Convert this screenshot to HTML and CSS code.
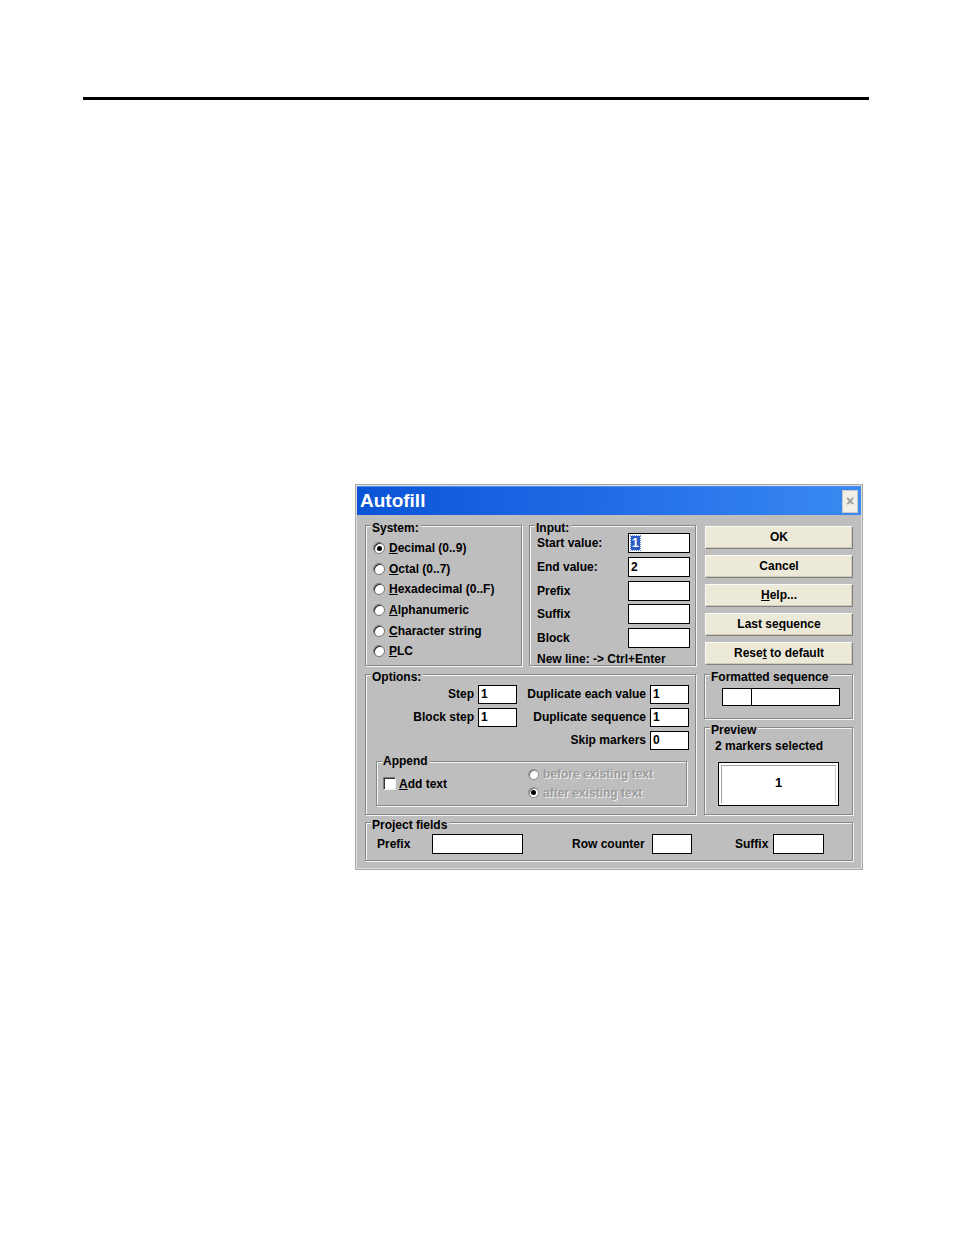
FILE: index.html
```html
<!DOCTYPE html>
<html>
<head>
<meta charset="utf-8">
<title>Autofill</title>
<link rel="stylesheet" href="styles.css">
</head>
<body>
<div class="rule"></div>

<div class="dialog">
  <div class="titlebar">
    <span class="title">Autofill</span>
    <span class="close">&#215;</span>
  </div>
  <div class="body">
    <div class="row1">
      <div class="group system">
        <span class="legend">System:</span>
        <div class="radio-row"><span class="radio checked"></span><span><u>D</u>ecimal (0..9)</span></div>
        <div class="radio-row"><span class="radio"></span><span><u>O</u>ctal (0..7)</span></div>
        <div class="radio-row"><span class="radio"></span><span><u>H</u>exadecimal (0..F)</span></div>
        <div class="radio-row"><span class="radio"></span><span><u>A</u>lphanumeric</span></div>
        <div class="radio-row"><span class="radio"></span><span><u>C</u>haracter string</span></div>
        <div class="radio-row"><span class="radio"></span><span><u>P</u>LC</span></div>
      </div>

      <div class="group input">
        <span class="legend">Input:</span>
        <div class="input-rows">
          <div class="input-row"><span>Start value:</span><span class="field wide"><span class="sel">1</span></span></div>
          <div class="input-row"><span>End value:</span><span class="field wide">2</span></div>
          <div class="input-row"><span>Prefix</span><span class="field wide"></span></div>
          <div class="input-row"><span>Suffix</span><span class="field wide"></span></div>
          <div class="input-row"><span>Block</span><span class="field wide"></span></div>
        </div>
        <div class="newline">New line: -&gt; Ctrl+Enter</div>
      </div>

      <div class="buttons">
        <div class="btn">OK</div>
        <div class="btn">Cancel</div>
        <div class="btn"><u>H</u>elp...</div>
        <div class="btn">Last se<u>q</u>uence</div>
        <div class="btn">Rese<u>t</u> to default</div>
      </div>
    </div>

    <div class="row2">
      <div class="group options">
        <span class="legend">Options:</span>
        <div class="opt-grid">
          <span class="lbl">Step</span><span class="field">1</span>
          <span class="lbl">Duplicate each value</span><span class="field">1</span>
          <span class="lbl">Block step</span><span class="field">1</span>
          <span class="lbl">Duplicate sequence</span><span class="field">1</span>
          <span></span><span></span>
          <span class="lbl">Skip markers</span><span class="field">0</span>
        </div>
        <div class="group append">
          <span class="legend legend-low">Append</span>
          <div class="append-left">
            <span class="check"></span><span><u>A</u>dd text</span>
          </div>
          <div class="append-right">
            <div class="dis-row"><span class="radio dim"></span><span class="disabled">before existing text</span></div>
            <div class="dis-row"><span class="radio dim checked"></span><span class="disabled">after existing text</span></div>
          </div>
        </div>
      </div>

      <div class="right-col">
        <div class="group formatted">
          <span class="legend">Formatted sequence</span>
          <div class="seq-box"><span class="seq-a"></span><span class="seq-b"></span></div>
        </div>
        <div class="group preview">
          <span class="legend">Preview</span>
          <div class="preview-text">2 markers selected</div>
          <div class="preview-box">1</div>
        </div>
      </div>
    </div>

    <div class="group project">
      <span class="legend">Project fields</span>
      <div class="proj-grid">
        <span>Prefix</span><span class="field"></span><span></span>
        <span>Row counter</span><span class="field"></span><span></span>
        <span>Suffix</span><span class="field"></span>
      </div>
    </div>
  </div>
</div>
</body>
</html>
```

FILE: styles.css
```css
* { box-sizing: border-box; }

body {
  margin: 0;
  background: #fff;
  font-family: "Liberation Sans", Arial, sans-serif;
  font-size: 12px;
  font-weight: bold;
  color: #000;
}

.rule {
  height: 3px;
  background: #000;
  margin: 97px 85px 0 83px;
}

.dialog {
  width: 508px;
  margin: 384px 0 0 355px;
  border: 1px solid #a9a9a9;
  padding: 1px;
  background: #dedede;
}

.titlebar {
  height: 29px;
  display: flex;
  align-items: center;
  background: linear-gradient(to right, #0a55d6 0%, #1e6ae6 45%, #3a8af2 100%);
  border-top: 1px solid #4d8ff0;
}

.title {
  color: #fff;
  font-size: 19px;
  font-weight: bold;
  padding-left: 3px;
  line-height: 22px;
}

.close {
  margin-left: auto;
  margin-right: 3px;
  width: 16px;
  height: 23px;
  background: #f1efe6;
  border: 1px solid #c8c8c8;
  color: #9a9a9a;
  font-size: 14px;
  line-height: 21px;
  text-align: center;
}

.body {
  background: #bebebe;
  padding: 10px 8px 7px 8px;
}

.row1 {
  display: flex;
  height: 141px;
}

.group {
  position: relative;
  border: 1px solid #888;
  box-shadow: inset 1px 1px 0 #f4f4f4, 1px 1px 0 #f4f4f4;
}

.legend {
  position: absolute;
  top: -4px;
  left: 5px;
  line-height: 13px;
  padding: 0 2px 0 1px;
  background: #bebebe;
  white-space: nowrap;
}

.legend-low { top: -7px; }

/* System */
.system {
  width: 157px;
  padding: 12px 0 0 7px;
}

.radio-row {
  height: 20.6px;
  display: flex;
  align-items: center;
  gap: 4px;
}

.radio {
  flex: none;
  width: 12px;
  height: 12px;
  border-radius: 50%;
  background: #fff;
  border: 1px solid #767676;
  box-shadow: inset 1px 1px 0 #2a2a2a;
  position: relative;
}

.radio.checked::after {
  content: "";
  position: absolute;
  left: 2.5px;
  top: 2.5px;
  width: 5px;
  height: 5px;
  border-radius: 50%;
  background: #000;
}

/* Input */
.input {
  width: 167px;
  margin-left: 7px;
  padding: 7px 5px 0 7px;
}

.input-rows {
  display: grid;
  grid-auto-rows: 20px;
  row-gap: 3.75px;
}

.input-row {
  display: flex;
  align-items: center;
  justify-content: space-between;
}

.field {
  display: block;
  height: 19px;
  width: 39px;
  background: #fff;
  border: 1px solid #000;
  font-weight: bold;
  line-height: 17px;
  padding-left: 2px;
}

.field.wide {
  width: 62px;
  height: 20px;
  line-height: 18px;
}

.sel {
  background: #2d5bc4;
  color: #fff;
  padding: 0 1px;
  outline: 1px dotted #6c8be0;
}

.newline {
  margin-top: 4px;
  line-height: 14px;
}

/* Buttons */
.buttons {
  width: 148px;
  margin-left: 9px;
  padding-top: 1px;
  display: flex;
  flex-direction: column;
  gap: 6px;
}

.btn {
  height: 23px;
  background: #ece9d8;
  border: 1px solid;
  border-color: #fbfbf8 #7f7f7f #7f7f7f #fbfbf8;
  box-shadow: inset -1px -1px 0 #cfcbbb;
  text-align: center;
  line-height: 20px;
}

/* Row 2 */
.row2 {
  display: flex;
  gap: 8px;
  margin-top: 8px;
  height: 141px;
}

.options {
  width: 331px;
  padding-top: 10px;
}

.opt-grid {
  display: grid;
  grid-template-columns: 112px 39px 133px 39px;
  grid-auto-rows: 19px;
  row-gap: 4px;
}

.lbl {
  text-align: right;
  padding-right: 4px;
  line-height: 19px;
  white-space: nowrap;
}

.append {
  margin: 11px 8px 0 10px;
  height: 45px;
  display: flex;
  padding: 3px 0 0 6px;
}

.append-left {
  width: 145px;
  display: flex;
  align-items: center;
  gap: 3px;
  padding-bottom: 3px;
}

.check {
  width: 13px;
  height: 13px;
  background: #fff;
  border: 1px solid;
  border-color: #7a7a7a #efefef #efefef #7a7a7a;
  box-shadow: inset 1px 1px 0 #333;
}

.append-right {
  display: flex;
  flex-direction: column;
}

.dis-row {
  height: 18.5px;
  display: flex;
  align-items: center;
  gap: 4px;
}

.radio.dim {
  width: 11px;
  height: 11px;
  border-color: #8a8a8a;
  box-shadow: inset 1px 1px 0 #777;
}

.radio.dim.checked::after {
  left: 2px;
  top: 2px;
}

.disabled {
  color: #9c9c9c;
  text-shadow: 1px 1px 0 #f0f0f0;
}

.right-col {
  width: 149px;
  display: flex;
  flex-direction: column;
  gap: 8px;
}

.formatted {
  height: 45px;
  padding: 13px 0 0 17px;
}

.seq-box {
  width: 118px;
  height: 18px;
  display: flex;
  border: 1px solid #000;
  background: #fff;
}

.seq-a {
  width: 29px;
  border-right: 1px solid #000;
}

.preview {
  flex: 1;
  padding: 11px 0 0 10px;
}

.preview-text {
  line-height: 14px;
}

.preview-box {
  width: 121px;
  height: 44px;
  margin: 9px 0 0 3px;
  background: #fff;
  border: 1px solid #000;
  box-shadow: inset 0 0 0 2px #fff, inset 3px 3px 0 0 #a2a2a2, inset -3px 0 0 0 #d0d0d0;
  text-align: center;
  line-height: 40px;
  font-size: 13px;
}

/* Project */
.project {
  margin-top: 7px;
  height: 39px;
  padding: 11px 0 0 11px;
}

.proj-grid {
  display: grid;
  grid-template-columns: 55px 91px 49px 80px 40px 43px 38px 51px;
  height: 20px;
  align-items: center;
}

.proj-grid .field {
  height: 20px;
  width: auto;
}
```
